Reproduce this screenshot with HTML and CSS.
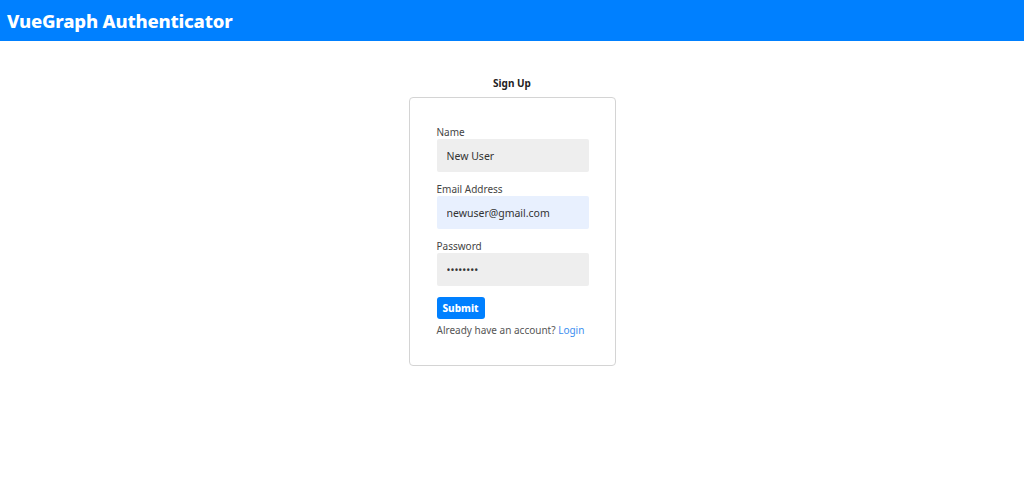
FILE: index.html
```html
<!DOCTYPE html>
<html lang="en">

<head>
    <meta charset="UTF-8">
    <meta name="viewport" content="width=device-width, initial-scale=1.0">
    <title>VueGraph Authenticator</title>
    <link rel="stylesheet" href="styles.css">
</head>

<body>

    <header class="topbar">
        <h1 class="brand">VueGraph Authenticator</h1>
    </header>

    <main class="page">
        <h2 class="form-title">Sign Up</h2>
        <form class="card">
            <div class="field">
                <label class="field-label">Name</label>
                <input class="field-input" type="text" value="New User">
            </div>
            <div class="field">
                <label class="field-label">Email Address</label>
                <input class="field-input field-input--filled" type="email" value="newuser@gmail.com">
            </div>
            <div class="field">
                <label class="field-label">Password</label>
                <input class="field-input" type="password" value="password">
            </div>
            <button class="submit" type="button">Submit</button>
            <p class="switch">Already have an account? <a href="#" class="switch-link">Login</a></p>
        </form>
    </main>

</body>

</html>
```

FILE: styles.css
```css
* {
    padding: 0px;
    margin: 0px;
    box-sizing: border-box;
}

body {
    font-family: "Noto Sans", "Open Sans", sans-serif;
    color: #333;
    background: #fff;
}

.topbar {
    height: 41px;
    background-color: #0080ff;
    display: flex;
    align-items: center;
    padding: 0 7px;
}

.brand {
    color: #fff;
    font-size: 18.5px;
    font-weight: 800;
    letter-spacing: -0.2px;
}

.page {
    display: flex;
    flex-direction: column;
    align-items: center;
    padding-top: 35px;
}

.form-title {
    font-size: 10px;
    line-height: 14px;
    font-weight: 700;
    color: #222;
    margin-bottom: 7px;
}

.card {
    width: 207px;
    border: 1px solid #d4d4d4;
    border-radius: 4px;
    padding: 28px 26px 29px 27px;
}

.field {
    display: flex;
    flex-direction: column;
    margin-bottom: 11px;
}

.field-label {
    font-size: 10px;
    line-height: 12px;
    color: #444;
    margin-bottom: 1px;
}

.field-input {
    height: 33px;
    border: none;
    border-radius: 2px;
    background-color: #eee;
    padding: 0 10px;
    font-family: inherit;
    font-size: 10.5px;
    color: #333;
    outline: none;
}

.field-input--filled {
    background-color: #e8f0fe;
}

.submit {
    display: block;
    width: 48px;
    height: 22px;
    margin-top: 2px;
    border: none;
    border-radius: 3px;
    background-color: #0080ff;
    color: #fff;
    font-family: inherit;
    font-size: 10px;
    font-weight: 800;
}

.switch {
    font-size: 10px;
    line-height: 12px;
    color: #555;
    margin-top: 5px;
}

.switch-link {
    color: #3d8ef0;
    text-decoration: none;
}
```
